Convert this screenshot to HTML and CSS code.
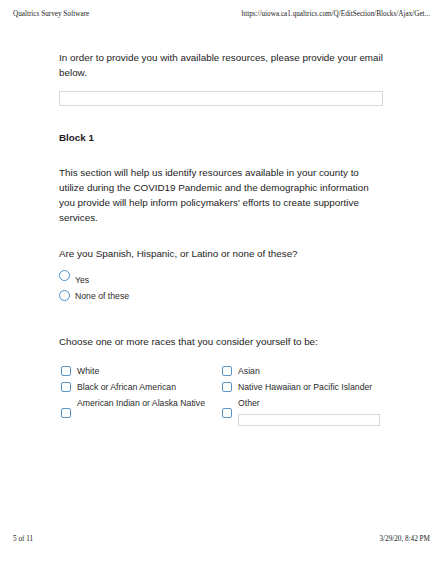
FILE: index.html
```html
<!DOCTYPE html>
<html>
<head>
<meta charset="utf-8">
<link rel="stylesheet" href="styles.css">
</head>
<body>
<div class="page">
  <header class="print-head">
    <span>Qualtrics Survey Software</span>
    <span>https://uiowa.ca1.qualtrics.com/Q/EditSection/Blocks/Ajax/Get...</span>
  </header>
  <main class="survey">
    <p class="q-text intro">In order to provide you with available resources, please provide your email below.</p>
    <div class="text-input wide"></div>
    <h2 class="block-title">Block 1</h2>
    <p class="q-text desc">This section will help us identify resources available in your county to utilize during the COVID19 Pandemic and the demographic information you provide will help inform policymakers' efforts to create supportive services.</p>
    <p class="q-text question">Are you Spanish, Hispanic, or Latino or none of these?</p>
    <div class="radio-list">
      <div class="radio-row yes"><span class="radio"></span><span class="opt-label">Yes</span></div>
      <div class="radio-row none"><span class="radio"></span><span class="opt-label">None of these</span></div>
    </div>
    <p class="q-text question races">Choose one or more races that you consider yourself to be:</p>
    <div class="check-grid">
      <div class="check-item"><span class="box"></span><span class="opt-label">White</span></div>
      <div class="check-item"><span class="box"></span><span class="opt-label">Asian</span></div>
      <div class="check-item"><span class="box"></span><span class="opt-label">Black or African American</span></div>
      <div class="check-item"><span class="box"></span><span class="opt-label">Native Hawaiian or Pacific Islander</span></div>
      <div class="check-item tall"><span class="box low"></span><div class="stack"><span class="opt-label">American Indian or Alaska Native</span><span class="spacer"></span></div></div>
      <div class="check-item tall"><span class="box low"></span><div class="stack"><span class="opt-label">Other</span><div class="text-input other"></div></div></div>
    </div>
  </main>
  <footer class="print-foot">
    <span>5 of 11</span>
    <span>3/29/20, 8:42 PM</span>
  </footer>
</div>
</body>
</html>
```

FILE: styles.css
```css
html, body {
  margin: 0;
  padding: 0;
  background: #ffffff;
}

.page {
  width: 443px;
  height: 573px;
  display: flex;
  flex-direction: column;
  box-sizing: border-box;
}

.print-head,
.print-foot {
  display: flex;
  justify-content: space-between;
  padding: 0 13px;
  font-family: "Liberation Serif", "Times New Roman", serif;
  font-size: 7.2px;
  line-height: 9px;
  color: #222;
}

.print-head {
  padding-top: 10px;
}

.print-foot {
  margin-top: auto;
  padding-bottom: 29px;
}

.survey {
  padding-left: 59px;
  width: 326px;
  font-family: "Liberation Sans", Arial, Helvetica, sans-serif;
  color: #1c1c1c;
}

.q-text {
  margin: 0;
  font-size: 9.85px;
  line-height: 15px;
}

.intro {
  margin-top: 31px;
}

.text-input {
  box-sizing: border-box;
  border: 1px solid #d8d8d8;
  background: #fff;
  height: 15px;
}

.text-input.wide {
  margin-top: 11px;
  width: 324px;
}

.block-title {
  margin: 24px 0 0;
  font-size: 9.85px;
  line-height: 15px;
  font-weight: bold;
}

.desc {
  margin-top: 20px;
}

.question {
  margin-top: 21px;
}

.radio-list {
  display: flex;
  flex-direction: column;
  gap: 5px;
  margin-top: 7px;
}

.radio-row {
  display: flex;
  align-items: center;
  gap: 5px;
  height: 15px;
}

.radio-row.yes .opt-label {
  align-self: flex-end;
  line-height: 10px;
  margin-bottom: -2px;
}

.radio {
  box-sizing: border-box;
  width: 11px;
  height: 11px;
  border: 1.3px solid #4f8fc6;
  border-radius: 50%;
}

.opt-label {
  font-size: 8.7px;
  line-height: 12px;
  color: #2a2a2a;
}

.races {
  margin-top: 31px;
}

.check-grid {
  display: grid;
  grid-template-columns: 161px 1fr;
  row-gap: 4px;
  margin-top: 16px;
  margin-left: 2px;
}

.check-item {
  display: flex;
  align-items: center;
  gap: 6px;
  height: 12px;
}

.check-item.tall {
  align-items: flex-start;
  height: auto;
}

.box {
  box-sizing: border-box;
  flex: none;
  width: 10px;
  height: 10px;
  border: 1.4px solid #5b95c5;
  border-radius: 2px;
}

.box.low {
  margin-top: 11px;
}

.stack {
  display: flex;
  flex-direction: column;
  gap: 5px;
}

.spacer {
  height: 11px;
}

.text-input.other {
  width: 142px;
  height: 12px;
}
```
